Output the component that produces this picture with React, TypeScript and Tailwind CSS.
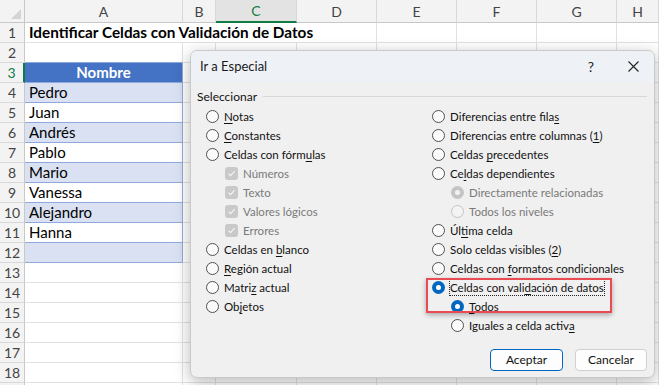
import React from 'react';

const SHEET_FONT = "font-['Lato','Liberation_Sans',sans-serif]";
const DLG_FONT = "font-['Lato','Liberation_Sans',sans-serif]";

const colLetters = ['A', 'B', 'C', 'D', 'E', 'F', 'G', 'H'];
const names = ['Pedro', 'Juan', 'Andrés', 'Pablo', 'Mario', 'Vanessa', 'Alejandro', 'Hanna', ''];

// label uses & before the mnemonic char
function Label({ text }: { text: string }) {
  const i = text.indexOf('&');
  if (i < 0) return <span>{text}</span>;
  return (
    <span>
      {text.slice(0, i)}
      <span className="underline underline-offset-[2px]">{text[i + 1]}</span>
      {text.slice(i + 2)}
    </span>
  );
}

function Radio({ checked, disabled }: { checked?: boolean; disabled?: boolean }) {
  if (checked && !disabled)
    return (
      <span className="w-[13px] h-[13px] rounded-full bg-[#0067c0] flex items-center justify-center shrink-0">
        <span className="w-[5px] h-[5px] rounded-full bg-white" />
      </span>
    );
  if (checked && disabled)
    return (
      <span className="w-[13px] h-[13px] rounded-full bg-[#c4c4c4] flex items-center justify-center shrink-0">
        <span className="w-[5px] h-[5px] rounded-full bg-[#f2f2f2]" />
      </span>
    );
  if (disabled)
    return <span className="w-[13px] h-[13px] rounded-full border border-[#c4c4c4] bg-[#f3f3f3] shrink-0" />;
  return <span className="w-[13px] h-[13px] rounded-full border border-[#505050] bg-[#fbfbfb] shrink-0" />;
}

function Check() {
  return (
    <span className="w-[13px] h-[13px] rounded-[3px] bg-[#c9c9c9] flex items-center justify-center shrink-0">
      <svg width="9" height="9" viewBox="0 0 9 9" fill="none">
        <path d="M1.5 4.6 L3.6 6.6 L7.6 2.2" stroke="#f4f4f4" strokeWidth="1.2" />
      </svg>
    </span>
  );
}

type Item = { t: string; kind?: 'radio' | 'check'; indent?: boolean; disabled?: boolean; checked?: boolean; focus?: boolean };

const leftItems: Item[] = [
  { t: '&Notas' },
  { t: '&Constantes' },
  { t: 'Celdas con fórm&ulas' },
  { t: 'Números', kind: 'check', indent: true, disabled: true },
  { t: 'Texto', kind: 'check', indent: true, disabled: true },
  { t: 'Valores lógicos', kind: 'check', indent: true, disabled: true },
  { t: 'Errores', kind: 'check', indent: true, disabled: true },
  { t: 'Celdas en &blanco' },
  { t: '&Región actual' },
  { t: 'Matri&z actual' },
  { t: 'Ob&jetos' },
];

const rightItems: Item[] = [
  { t: 'Diferencias entre fila&s' },
  { t: 'Diferencias entre columnas (&1)' },
  { t: 'Celdas &precedentes' },
  { t: 'Ce&ldas dependientes' },
  { t: 'Directamente relacionadas', indent: true, disabled: true, checked: true },
  { t: 'Todos los niveles', indent: true, disabled: true },
  { t: 'Úl&tima celda' },
  { t: 'Solo celdas visibles (&2)' },
  { t: 'Celdas con &formatos condicionales' },
  { t: 'Celdas con vali&dación de datos', checked: true, focus: true },
  { t: '&Todos', indent: true, checked: true },
  { t: 'Iguales a celda activ&a', indent: true },
];

function Row({ item }: { item: Item }) {
  return (
    <div className={`h-[19px] flex items-center gap-[5px] ${item.indent ? 'pl-[19px]' : ''}`}>
      {item.kind === 'check' ? <Check /> : <Radio checked={item.checked} disabled={item.disabled} />}
      <span
        className={`whitespace-nowrap leading-[15px] ${item.disabled ? 'text-[#7a7a7a]' : 'text-[#111]'} ${
          item.focus ? 'outline outline-1 outline-dotted outline-[#222] outline-offset-0' : ''
        }`}
      >
        <Label text={item.t} />
      </span>
    </div>
  );
}

function Dialog() {
  return (
    <div
      className={`absolute left-[190px] top-[50px] w-[465px] h-[328px] rounded-[7px] border border-[#c9c9c9] bg-[#f0f0f0] shadow-[0_4px_16px_rgba(0,0,0,0.28)] flex flex-col overflow-hidden text-[11.5px] ${DLG_FONT}`}
    >
      <div className="h-[31px] bg-[#eef2f7] flex items-center pl-[9px] pr-[15px] shrink-0">
        <span className="text-[13px] text-[#1a1a1a]">Ir a Especial</span>
        <span className="ml-auto text-[14px] text-[#222] mr-[34px]">?</span>
        <svg width="11" height="11" viewBox="0 0 11 11">
          <path d="M0.5 0.5 L10.5 10.5 M10.5 0.5 L0.5 10.5" stroke="#222" strokeWidth="1.1" />
        </svg>
      </div>
      <div className="relative flex-1 flex flex-col px-[6px] pt-[5px]">
        <div className="h-[19px] flex items-center gap-[6px] mr-[1px]">
          <span className="text-[#111] text-[12px]">Seleccionar</span>
          <span className="flex-1 h-px bg-[#d8d8d8]" />
        </div>
        <div className="grid grid-cols-[226px_1fr] pl-[9px] mt-[1px]">
          <div className="flex flex-col">
            {leftItems.map((it) => (
              <Row key={it.t} item={it} />
            ))}
          </div>
          <div className="flex flex-col">
            {rightItems.map((it) => (
              <Row key={it.t} item={it} />
            ))}
          </div>
        </div>
        <div className="absolute left-[235px] top-[196px] w-[186px] h-[35px] border-2 border-[#ea4a52] shadow-[0_2px_5px_rgba(0,0,0,0.3)]" />
        <div className="mt-auto flex justify-end gap-[12px] pb-[6px] pr-[1px]">
          <button className="w-[73px] h-[22px] rounded-[4px] border border-[#0067c0] bg-[#fdfdfd] text-[#111] text-[12px]">
            Aceptar
          </button>
          <button className="w-[72px] h-[22px] rounded-[4px] border border-[#d0d0d0] bg-[#fdfdfd] text-[#111] text-[12px]">
            Cancelar
          </button>
        </div>
      </div>
    </div>
  );
}

function SheetRow({ r }: { r: number }) {
  const inTable = r >= 3 && r <= 12;
  const isHead = r === 3;
  const band = r >= 4 && r % 2 === 0;
  const hdr = (
    <div
      className={`h-[20px] flex items-center justify-center bg-[#f3f3f3] border-b border-[#d8d8d8] text-[14px] ${
        r === 3 ? 'border-r-2 border-r-[#107c41] text-[#107c41] bg-[#e3e3e3]' : 'border-r border-r-[#c8c8c8] text-[#444]'
      }`}
    >
      {r <= 18 ? r : ''}
    </div>
  );
  if (r === 1)
    return (
      <>
        {hdr}
        <div className="col-span-4 h-[20px] flex items-center pl-[4px] border-b border-r border-[#e1e1e1] font-bold text-[15.3px] text-black whitespace-nowrap">
          Identificar Celdas con Validación de Datos
        </div>
        {['E', 'F', 'G', 'H'].map((c) => (
          <div key={c} className="h-[20px] border-b border-r border-[#e1e1e1]" />
        ))}
      </>
    );
  return (
    <>
      {hdr}
      {inTable ? (
        <div
          className={`h-[20px] flex items-center border-b border-r border-[#8ea9db] text-[15px] whitespace-nowrap ${
            isHead
              ? 'bg-[#4472c4] text-white font-bold justify-center border-b-[#8ea9db]'
              : band
              ? 'bg-[#d9e1f2] text-black pl-[4px]'
              : 'bg-white text-black pl-[4px]'
          }`}
        >
          {isHead ? 'Nombre' : names[r - 4]}
        </div>
      ) : (
        <div className={`h-[20px] border-b border-r ${r === 2 ? 'border-b-[#8ea9db]' : 'border-[#e1e1e1]'} border-r-[#e1e1e1]`} />
      )}
      {colLetters.slice(1).map((c) => (
        <div key={c} className="h-[20px] border-b border-r border-[#e1e1e1]" />
      ))}
    </>
  );
}

export default function App() {
  const rows = Array.from({ length: 19 }, (_, i) => i + 1);
  return (
    <div className={`relative w-[659px] h-[385px] overflow-hidden bg-white ${SHEET_FONT}`}>
      <div className="grid grid-cols-[25px_158px_33px_81px_80px_80px_80px_80px_1fr]">
        <div className="h-[23px] bg-[#f3f3f3] border-b border-r border-[#c8c8c8] flex items-end justify-end pr-[3px] pb-[3px]">
          <svg width="10" height="10" viewBox="0 0 10 10">
            <path d="M10 0 L10 10 L0 10 Z" fill="#d4d4d4" />
          </svg>
        </div>
        {colLetters.map((c) => (
          <div
            key={c}
            className={`h-[23px] flex items-center justify-center text-[14px] border-r border-[#d8d8d8] ${
              c === 'C'
                ? 'bg-[#e3e3e3] text-[#107c41] border-b-2 border-b-[#107c41]'
                : 'bg-[#f3f3f3] text-[#444] border-b border-b-[#c8c8c8]'
            }`}
          >
            {c}
          </div>
        ))}
        {rows.map((r) => (
          <SheetRow key={r} r={r} />
        ))}
      </div>
      <Dialog />
    </div>
  );
}
